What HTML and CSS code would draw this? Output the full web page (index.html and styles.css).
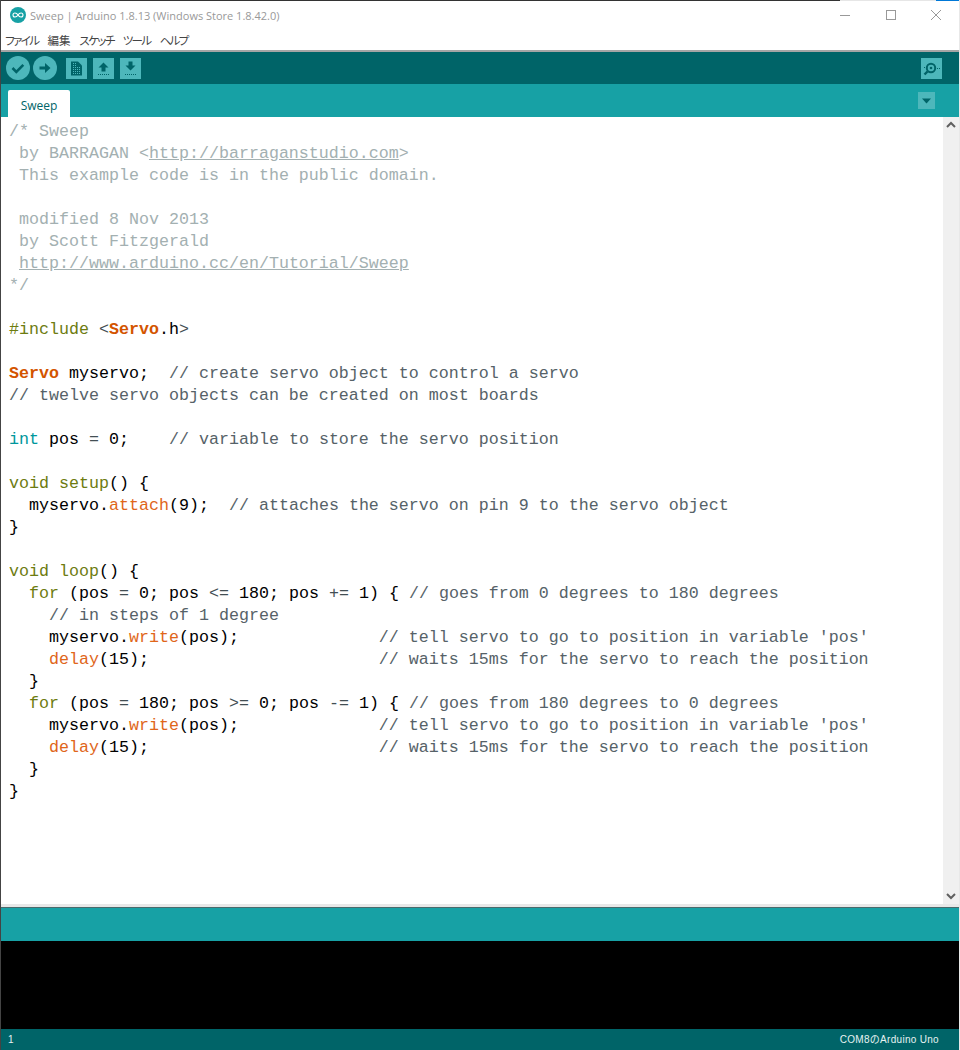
FILE: index.html
```html
<!DOCTYPE html>
<html lang="ja">
<head>
<meta charset="utf-8">
<title>Sweep | Arduino 1.8.13</title>
<link rel="stylesheet" href="styles.css">
</head>
<body>
<div class="window">
  <div class="frame-top"><i class="ft-dark"></i><i class="ft-light"></i><i class="ft-blue"></i></div>
  <div class="titlebar">
    <svg class="logo" width="16" height="16" viewBox="0 0 16 16"><circle cx="8" cy="8" r="8" fill="#17a1a5"/><path d="M8 8C7 6.400 6 6 5 6a2 2 0 0 0 0 4c1 0 2-.4 3-2s2-2 3-2a2 2 0 0 1 0 4c-1 0-2-.4-3-2z" fill="none" stroke="#fff" stroke-width="1.100"/></svg>
    <span class="title">Sweep | Arduino 1.8.13 (Windows Store 1.8.42.0)</span>
    <div class="controls">
      <svg width="10" height="10" viewBox="0 0 10 10"><path d="M0 5.500h10" stroke="#999" fill="none"/></svg>
      <svg width="10" height="10" viewBox="0 0 10 10"><rect x=".5" y=".5" width="9" height="9" stroke="#999" fill="none"/></svg>
      <svg width="10" height="10" viewBox="0 0 10 10"><path d="M0 0l10 10M10 0L0 10" stroke="#999" fill="none"/></svg>
    </div>
  </div>
  <div class="menubar"><span class="kana">ファイル</span><span>編集</span><span class="kana">スケッチ</span><span class="kana">ツール</span><span class="kana">ヘルプ</span></div>
  <div class="toolbar">
    <div class="round-btns">
      <svg class="rb" width="24" height="24" viewBox="0 0 24 24"><circle cx="12" cy="12" r="12" fill="#4db7bb"/><path d="M6.500 12l3.800 3.800 7-7" fill="none" stroke="#006468" stroke-width="2.600"/></svg>
      <svg class="rb" width="24" height="24" viewBox="0 0 24 24"><circle cx="12" cy="12" r="12" fill="#4db7bb"/><path d="M6.500 10.500h5.500V7l5.500 5-5.500 5v-3.500H6.500z" fill="#006468"/></svg>
    </div>
    <div class="square-btns">
      <svg width="21" height="21" viewBox="0 0 21 21"><rect width="21" height="21" fill="#4db7bb"/><path d="M5 3.500h7l4 4v10H5z" fill="#006468"/><path d="M7 9.500h1M9 9.500h1M11 9.500h1M13 9.500h1M7 11.500h1M9 11.500h1M11 11.500h1M13 11.500h1M7 13.500h1M9 13.500h1M11 13.500h1M13 13.500h1M7 15.500h1M9 15.500h1M11 15.500h1M13 15.500h1M7 7.500h1M9 7.500h1M7 5.500h1M9 5.500h1" stroke="#4db7bb"/></svg>
      <svg width="21" height="21" viewBox="0 0 21 21"><rect width="21" height="21" fill="#4db7bb"/><path d="M10.500 4.500l5 5h-3v4h-4v-4h-3z" fill="#006468"/><path d="M5 16.500h11" stroke="#006468" stroke-dasharray="1 1"/></svg>
      <svg width="21" height="21" viewBox="0 0 21 21"><rect width="21" height="21" fill="#4db7bb"/><path d="M8.500 3.500h4v4h3l-5 5-5-5h3z" fill="#006468"/><path d="M5 16.500h11" stroke="#006468" stroke-dasharray="1 1"/></svg>
    </div>
    <svg class="monitor" width="21" height="21" viewBox="0 0 21 21"><rect width="21" height="21" fill="#4db7bb"/><circle cx="10" cy="10" r="4.200" fill="none" stroke="#006468" stroke-width="2"/><circle cx="10" cy="10" r="1.300" fill="#006468"/><path d="M6.500 13.500L3.500 16.500" stroke="#006468" stroke-width="2.400"/><path d="M16 10.500h1M18 10.500h1M3 9.500h1" stroke="#006468"/></svg>
  </div>
  <div class="tabbar">
    <div class="tab">Sweep</div>
    <svg class="tabmenu" width="17" height="17" viewBox="0 0 17 17"><rect width="17" height="17" fill="#4db7bb"/><path d="M4 6.500h9l-4.500 5z" fill="#006468"/></svg>
  </div>
  <div class="editor">
<pre class="code"><span class="cm">/* Sweep
 by BARRAGAN &lt;<u>http://barraganstudio.com</u>&gt;
 This example code is in the public domain.

 modified 8 Nov 2013
 by Scott Fitzgerald
 <u>http://www.arduino.cc/en/Tutorial/Sweep</u>
*/</span>

<span class="kw">#include</span> <span class="op">&lt;</span><b class="bfn">Servo</b>.h<span class="op">&gt;</span>

<b class="bfn">Servo</b> myservo;  <span class="lc">// create servo object to control a servo</span>
<span class="lc">// twelve servo objects can be created on most boards</span>

<span class="ty">int</span> pos <span class="op">=</span> 0;    <span class="lc">// variable to store the servo position</span>

<span class="kw">void</span> <span class="kw">setup</span>() <span class="br">{</span>
  myservo.<span class="fn">attach</span>(9);  <span class="lc">// attaches the servo on pin 9 to the servo object</span>
<span class="br">}</span>

<span class="kw">void</span> <span class="kw">loop</span>() <span class="br">{</span>
  <span class="kw">for</span> (pos <span class="op">=</span> 0; pos <span class="op">&lt;=</span> 180; pos <span class="op">+=</span> 1) <span class="br">{</span> <span class="lc">// goes from 0 degrees to 180 degrees</span>
    <span class="lc">// in steps of 1 degree</span>
    myservo.<span class="fn">write</span>(pos);              <span class="lc">// tell servo to go to position in variable 'pos'</span>
    <span class="fn">delay</span>(15);                       <span class="lc">// waits 15ms for the servo to reach the position</span>
  <span class="br">}</span>
  <span class="kw">for</span> (pos <span class="op">=</span> 180; pos <span class="op">&gt;=</span> 0; pos <span class="op">-=</span> 1) <span class="br">{</span> <span class="lc">// goes from 180 degrees to 0 degrees</span>
    myservo.<span class="fn">write</span>(pos);              <span class="lc">// tell servo to go to position in variable 'pos'</span>
    <span class="fn">delay</span>(15);                       <span class="lc">// waits 15ms for the servo to reach the position</span>
  <span class="br">}</span>
<span class="br">}</span></pre>
    <div class="scrollbar">
      <svg width="16" height="16" viewBox="0 0 16 16"><path d="M4 10l4-4 4 4" fill="none" stroke="#606060" stroke-width="2"/></svg>
      <svg width="16" height="16" viewBox="0 0 16 16"><path d="M4 6l4 4 4-4" fill="none" stroke="#606060" stroke-width="2"/></svg>
    </div>
  </div>
  <div class="hscroll"></div>
  <div class="messagebar"></div>
  <div class="console"></div>
  <div class="status"><span>1</span><span class="board">COM8のArduino Uno</span></div>
</div>
</body>
</html>
```
FILE: styles.css
```css
html, body { margin: 0; padding: 0; background: #fff; }
.window {
  width: 960px; height: 1050px; box-sizing: border-box;
  display: flex; flex-direction: column;
  border-left: 1px solid #444; border-right: 1px solid #e8e8e8;
  overflow: hidden;
}
.frame-top { display: flex; height: 1px; margin: 0 -1px 0 -1px; flex: none; }
.frame-top i { display: block; height: 1px; }
.ft-dark { flex: 1; background: #333; }
.ft-light { width: 96px; background: #e6e6e6; }
.ft-blue { width: 24px; background: #0078d7; }
.titlebar {
  height: 27px; flex: none; display: flex; align-items: center;
  padding-left: 9px; background: #fff;
}
.logo { margin-right: 4px; }
.title { font: 11px/16px "Open Sans", sans-serif; color: #999; padding-top: 2px; }
.controls { margin-left: auto; display: flex; gap: 35.500px; padding-right: 18px; }
.menubar {
  height: 22px; box-sizing: border-box; padding: 2px 0 0 4px; flex: none;
  display: flex; align-items: center; gap: 9px;
  background: #fff;
  font: 11.500px/16px "Noto Sans CJK JP", sans-serif; color: #444;
  font-feature-settings: "palt";
}
.kana { letter-spacing: -1.600px; }
.toolbar {
  height: 32px; flex: none; display: flex; align-items: center;
  background: #006468; border-top: 2px solid #a5a5a5; box-sizing: content-box;
  padding-left: 5px; padding-right: 17px;
}
.round-btns { display: flex; gap: 3px; }
.rb { display: block; }
.square-btns { display: flex; gap: 6px; margin-left: 9px; }
.square-btns svg, .monitor, .tabmenu { display: block; }
.monitor { margin-left: auto; }
.tabbar {
  height: 33px; flex: none; display: flex; align-items: flex-end;
  background: #17a1a5; padding-left: 7px; padding-right: 24px;
}
.tab {
  width: 62px; height: 27px; box-sizing: border-box; padding-top: 8px; text-align: center;
  background: #fff; border-radius: 2px 2px 0 0;
  font: 12px/16px "Open Sans", sans-serif; color: #006468;
}
.tabmenu { margin-left: auto; align-self: flex-start; margin-top: 8px; }
.editor { flex: 1; min-height: 0; display: flex; background: #fff; }
.code {
  flex: 1; margin: 0; padding: 4px 0 0 8px;
  font: 16.670px/22px "Liberation Mono", "Courier New", monospace; color: #000;
  overflow: hidden;
}
.cm { color: #a3b0b1; }
.lc { color: #566268; }
.kw { color: #6d7c10; }
.fn { color: #e0661a; }
.bfn { color: #d35400; font-weight: bold; }
.ty { color: #00979c; }
.op { color: #434f54; }
.br { color: #000; }
.scrollbar {
  width: 16px; flex: none; background: #f0f0f0;
  display: flex; flex-direction: column; justify-content: space-between;
}
.scrollbar svg { display: block; }
.hscroll { height: 3px; flex: none; background: #e8e8e8; }
.messagebar { height: 33px; flex: none; background: #17a1a5; border-top: 1px solid #4a6a6c; }
.console { height: 88px; flex: none; background: #000; }
.status {
  height: 21px; flex: none; display: flex; align-items: center; justify-content: space-between;
  background: #006468; color: #e6f2f2; padding: 0 20px 0 7px;
  font: 10px/12px "Liberation Sans", "Noto Sans CJK JP", sans-serif;
}
.board { letter-spacing: .3px; }
```
